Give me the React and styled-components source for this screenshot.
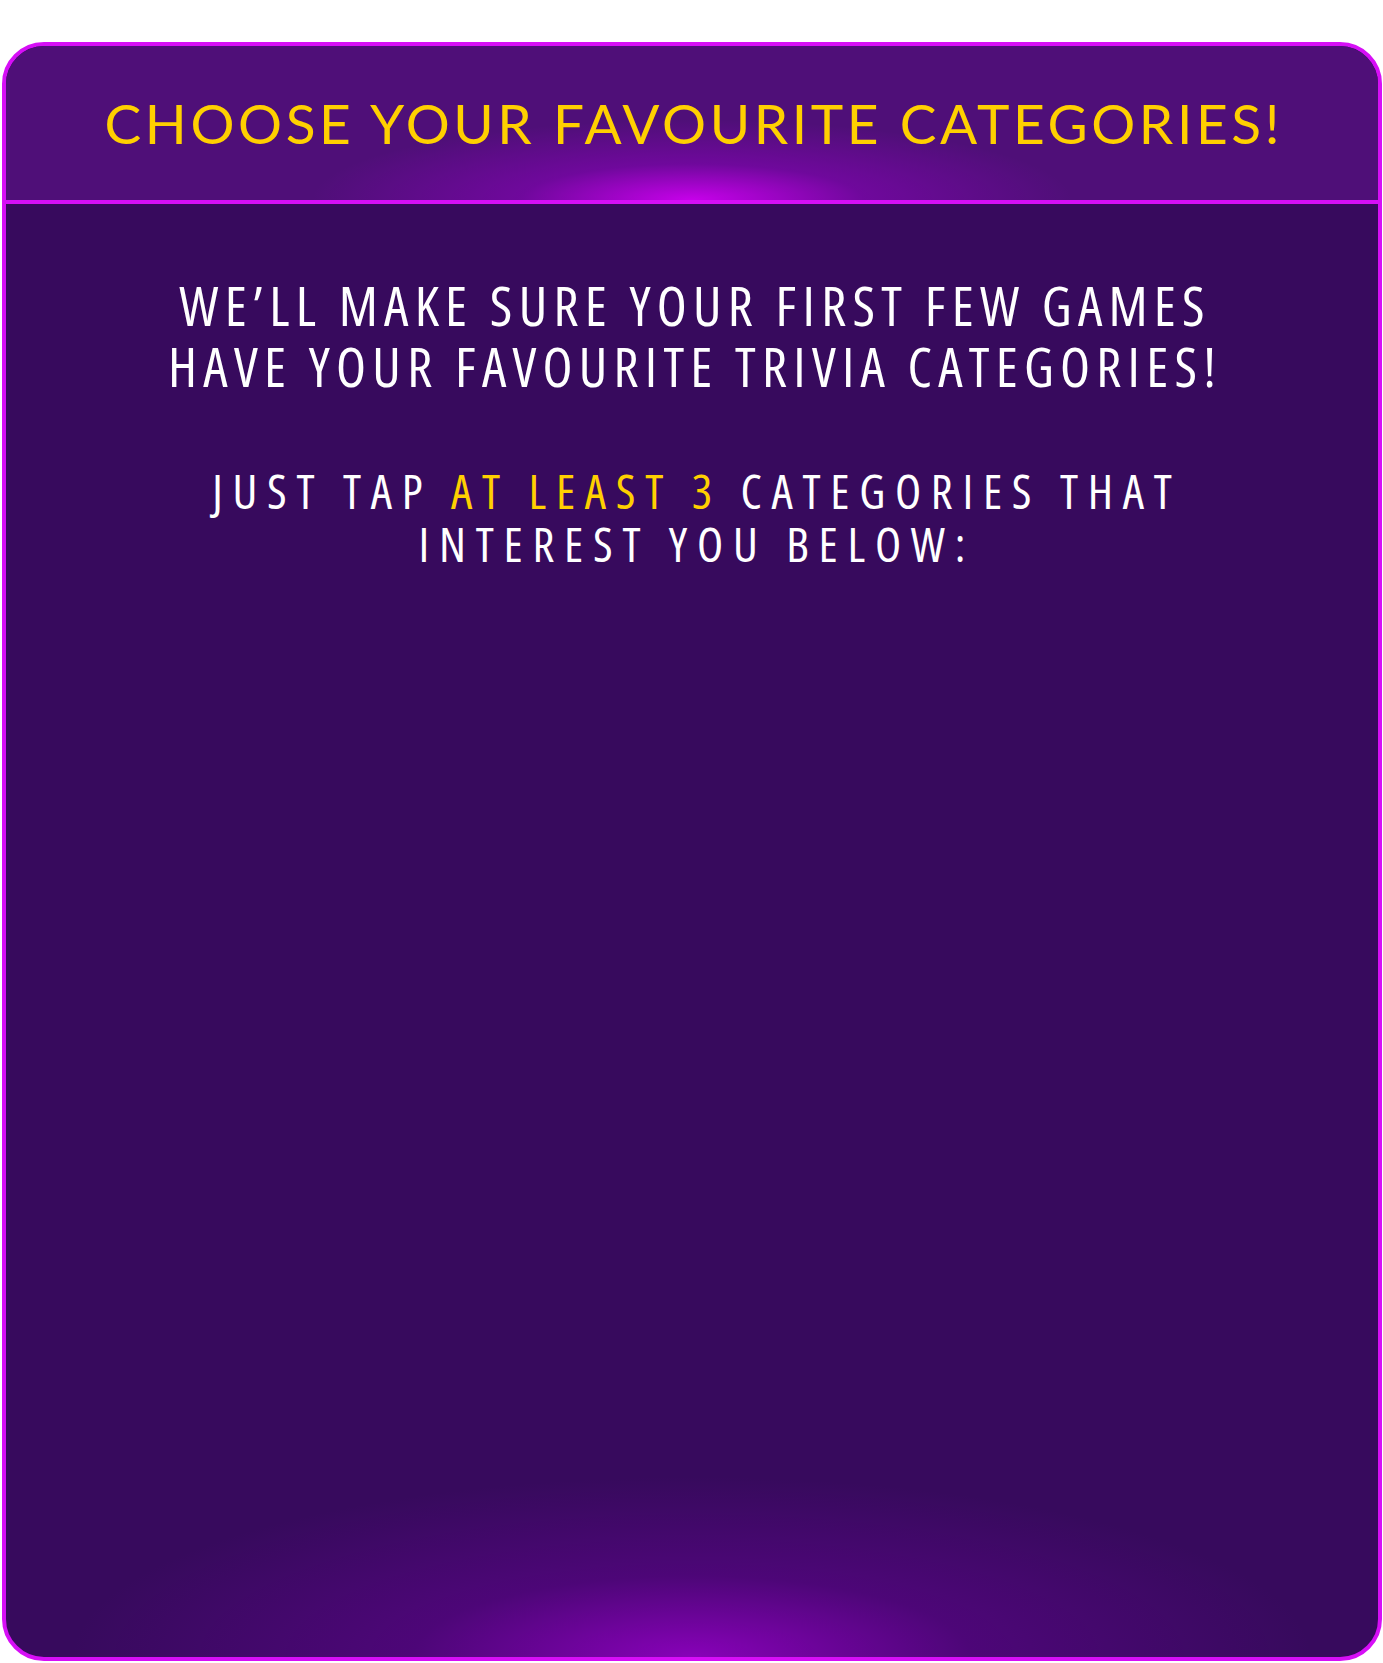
import React from "react";
import styled, { createGlobalStyle } from "styled-components";

const GlobalStyle = createGlobalStyle`
  html, body {
    margin: 0;
    padding: 0;
    background: #ffffff;
  }
  body {
    font-family: "Open Sans", "Liberation Sans", sans-serif;
  }
`;

const Page = styled.div`
  padding: 42px 1px 2px 2px;
  box-sizing: border-box;
`;

const Card = styled.section`
  height: 1619px;
  box-sizing: border-box;
  border: 4px solid #d60ff6;
  border-radius: 42px;
  overflow: hidden;
  display: flex;
  flex-direction: column;
  background-color: #370a5d;
  background-image: radial-gradient(
    ellipse 620px 180px at 50% 100%,
    rgba(150, 0, 200, 0.85) 0%,
    rgba(110, 0, 160, 0.4) 45%,
    rgba(55, 10, 93, 0) 100%
  );
`;

const Header = styled.header`
  height: 154px;
  flex-shrink: 0;
  display: flex;
  align-items: center;
  justify-content: center;
  border-bottom: 4px solid #d60ff6;
  background-color: #4f0f78;
  background-image: radial-gradient(
    ellipse 380px 80px at 50% 100%,
    rgba(205, 0, 240, 0.95) 0%,
    rgba(150, 0, 200, 0.45) 45%,
    rgba(79, 15, 120, 0) 100%
  );
`;

const Title = styled.h1`
  margin: 0;
  padding-left: 0.065em;
  font-family: Lato, "Open Sans", sans-serif;
  font-size: 55px;
  line-height: 1;
  font-weight: 400;
  letter-spacing: 0.065em;
  color: #ffd000;
  text-transform: uppercase;
  white-space: nowrap;
`;

const Body = styled.div`
  flex: 1;
  display: flex;
  flex-direction: column;
  align-items: center;
  padding-top: 70px;
  gap: 68px;
`;

const Lead = styled.p`
  margin: 0;
  padding-left: ${({ $track }) => $track}em;
  text-align: center;
  color: #ffffff;
  font-size: ${({ $size }) => $size}px;
  line-height: ${({ $lh }) => $lh}px;
  font-stretch: 75%;
  letter-spacing: ${({ $track }) => $track}em;
  text-transform: uppercase;
  white-space: nowrap;
`;

const Highlight = styled.span`
  color: #ffd000;
`;

export default function App() {
  return (
    <>
      <GlobalStyle />
      <Page>
        <Card>
          <Header>
            <Title>Choose your favourite categories!</Title>
          </Header>
          <Body>
            <Lead $size={55} $lh={61} $track={0.114}>
              We’ll make sure your first few games
              <br />
              have your favourite trivia categories!
            </Lead>
            <Lead $size={48} $lh={53} $track={0.203}>
              Just tap <Highlight>at least 3</Highlight> categories that
              <br />
              interest you below:
            </Lead>
          </Body>
        </Card>
      </Page>
    </>
  );
}
